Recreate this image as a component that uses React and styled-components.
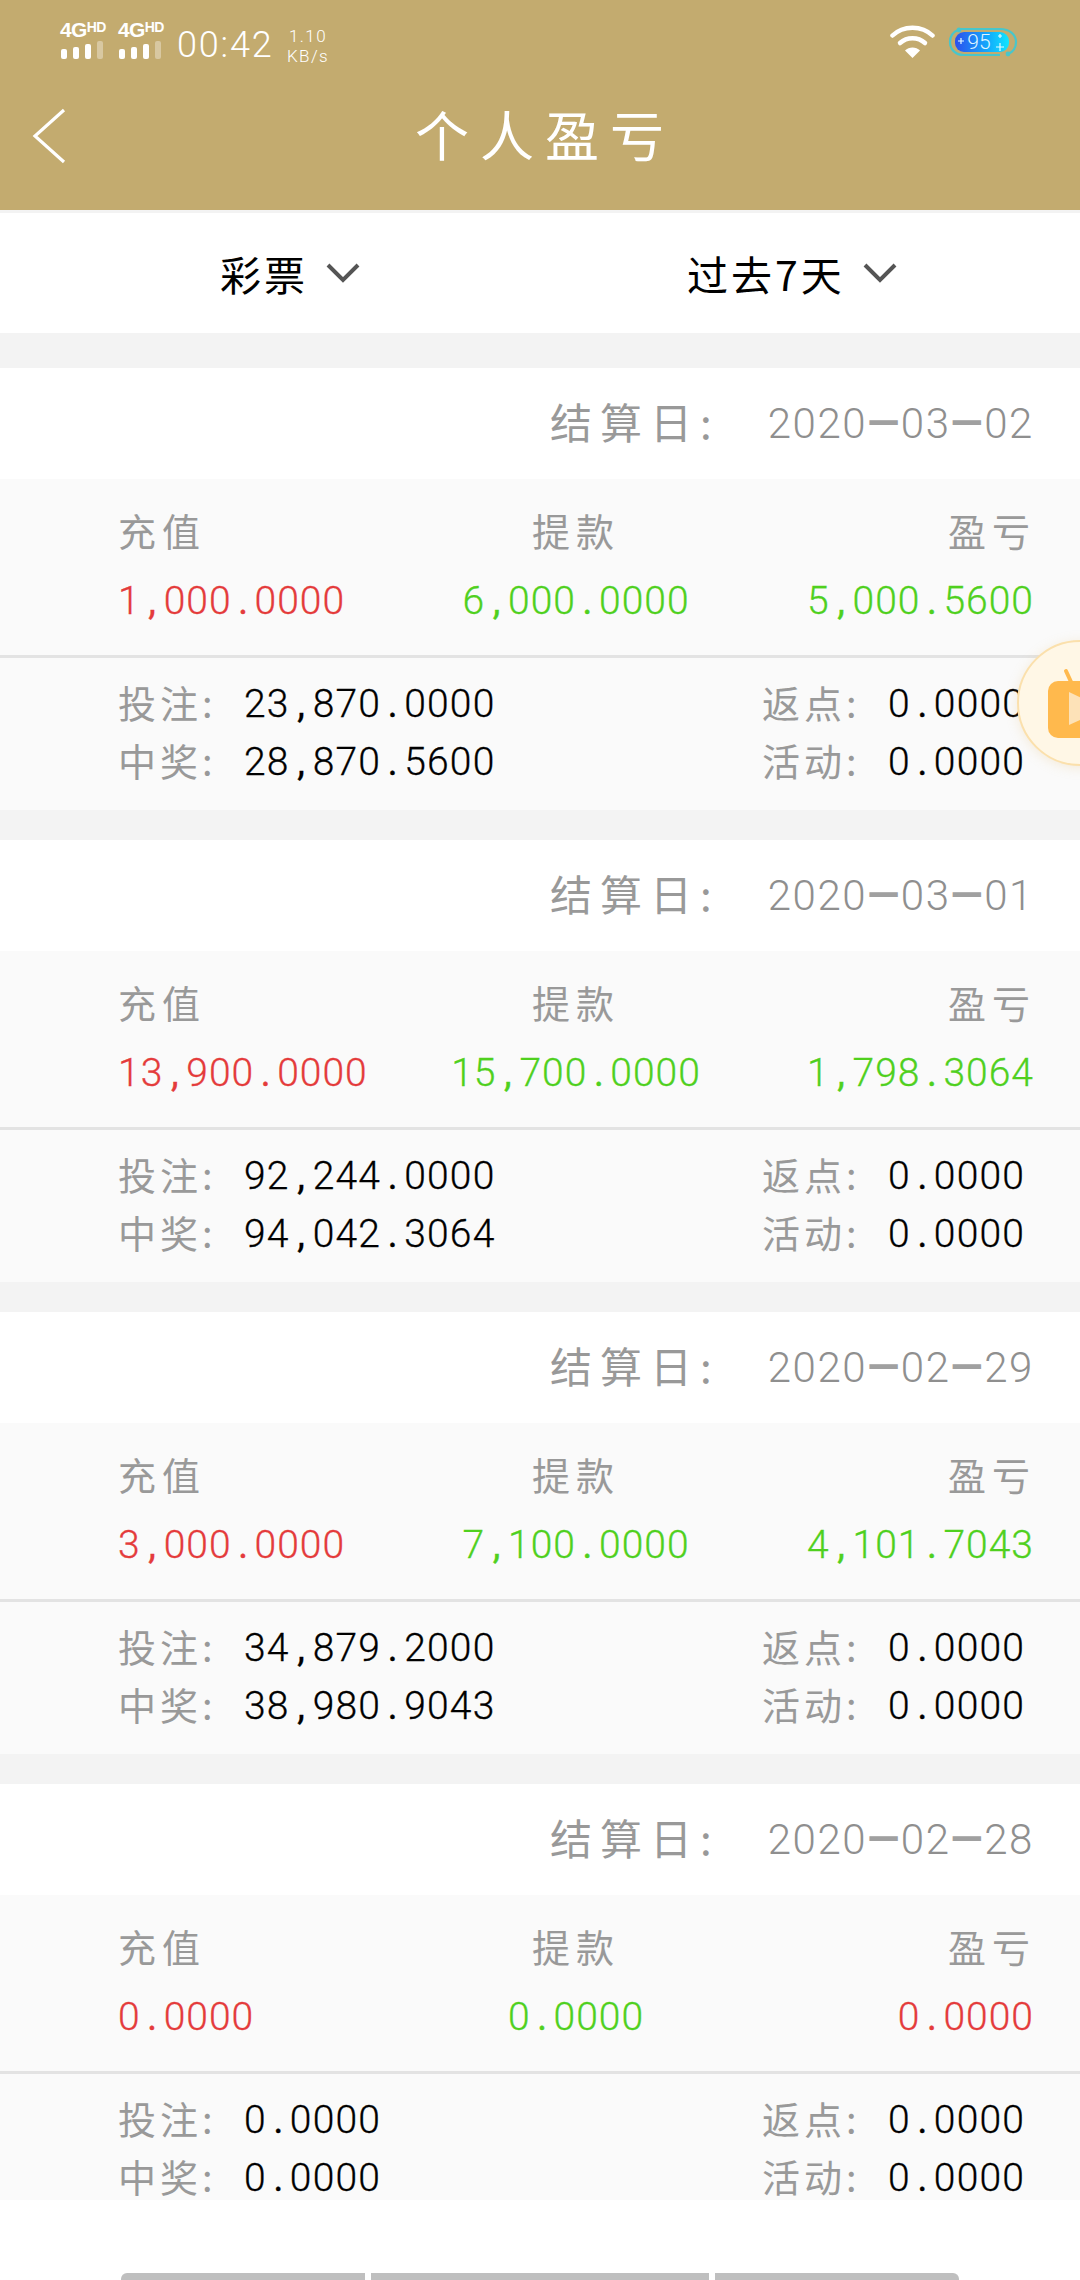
import React from "react";
import styled, { createGlobalStyle } from "styled-components";

const CJK = `"Noto Sans CJK SC", "Noto Sans", sans-serif`;
const NUM = `Roboto, "Liberation Sans", sans-serif`;

const Global = createGlobalStyle`
  html, body { margin: 0; padding: 0; background: #fff; }
  * { box-sizing: border-box; }
`;

const Page = styled.div`
  position: relative;
  width: 1080px;
  height: 2280px;
  overflow: hidden;
  display: flex;
  flex-direction: column;
  background: #f3f3f3;
  font-family: ${CJK};
`;

const Header = styled.header`
  height: 210px;
  flex: none;
  background: #c3ab6f;
  color: #fff;
  display: flex;
  flex-direction: column;
`;

const StatusBar = styled.div`
  height: 78px;
  padding: 21px 62px 0 60px;
  display: flex;
  align-items: flex-start;
`;

const SimGroup = styled.div`
  display: flex;
  gap: 13px;
  width: 117px;
`;

const Sim = styled.div`
  width: 45px;
  display: flex;
  flex-direction: column;
  gap: 2px;
`;

const SimLabel = styled.div`
  font: 700 21px/18px "Liberation Sans", sans-serif;
  letter-spacing: -0.6px;
  white-space: nowrap;
  & > sup {
    font-size: 14px;
    line-height: 10px;
    vertical-align: 5px;
  }
`;

const Signal = styled.div`
  height: 18px;
  display: flex;
  gap: 6px;
  align-items: flex-end;
  padding-left: 1px;
`;

const SignalBar = styled.span`
  width: 6px;
  height: ${(p) => p.$h}px;
  border-radius: 2px;
  background: ${(p) => (p.$off ? "rgba(255,255,255,0.35)" : "#fff")};
`;

const Clock = styled.div`
  width: 108px;
  font: 300 36px/34px ${NUM};
  letter-spacing: 1.8px;
  margin-top: 7px;
  white-space: nowrap;
`;

const Speed = styled.div`
  font: 300 17px/20px ${NUM};
  letter-spacing: 1.4px;
  text-align: center;
  width: 46px;
  margin-top: 5px;
  white-space: nowrap;
`;

const StatusRight = styled.div`
  margin-left: auto;
  display: flex;
  align-items: center;
  gap: 13px;
  margin-top: 4px;
`;

const NavBar = styled.div`
  flex: 1;
  display: grid;
  grid-template-columns: 1fr auto 1fr;
  align-items: center;
  padding: 0 22px 16px 32px;
`;

const Title = styled.h1`
  margin: -5px 0 0;
  font: 400 54px/60px ${CJK};
  letter-spacing: 11px;
  color: #fff;
`;

const FilterBar = styled.div`
  margin-top: 3px;
  height: 120px;
  flex: none;
  background: #fff;
  display: flex;
  align-items: center;
  padding-left: 220px;
  gap: 327px;
`;

const Filter = styled.div`
  display: flex;
  align-items: center;
  gap: 18px;
  color: #000;
  font: 400 41px/50px ${CJK};
  letter-spacing: 3px;
  white-space: nowrap;
`;

const List = styled.div`
  margin-top: 35px;
  flex: 1;
  min-height: 0;
  overflow: hidden;
  display: flex;
  flex-direction: column;
  gap: 30px;
`;

const Card = styled.section`
  flex: none;
  height: 442px;
  display: flex;
  flex-direction: column;
`;

const CardHead = styled.div`
  height: 111px;
  flex: none;
  background: #fff;
  display: flex;
  align-items: center;
  justify-content: flex-end;
  padding-right: 46px;
  color: #999;
`;

const HeadLabel = styled.span`
  font: 400 42px/50px ${CJK};
  letter-spacing: 8px;
  margin: -6px 48px 0 0;
`;

const DateText = styled.span`
  font: 300 42px/50px ${NUM};
  letter-spacing: 1.6px;
  color: #8f8f8f;
  white-space: nowrap;
`;

const Dash = styled.span`
  font-weight: 700;
  color: #a0a0a0;
`;

const Stats = styled.div`
  height: 176px;
  flex: none;
  background: #fafafa;
  padding: 22px 46px 0 118px;
  display: grid;
  grid-template-columns: repeat(3, 1fr);
  grid-template-rows: 58px 58px;
  row-gap: 13px;
  align-items: center;
`;

const StatLabel = styled.div`
  font: 400 38px/58px ${CJK};
  letter-spacing: 6px;
  color: #999;
  text-align: ${(p) => p.$align};
  margin-right: ${(p) => (p.$align === "right" ? "-2px" : "0")};
`;

const StatValue = styled.div`
  font: 300 39px/58px ${NUM};
  letter-spacing: 1px;
  color: ${(p) => p.$color};
  text-align: ${(p) => p.$align};
  white-space: nowrap;
  -webkit-text-stroke: 0.3px ${(p) => p.$color};
`;

const Punct = styled.span`
  display: inline-block;
  width: 23px;
  text-align: center;
  letter-spacing: 0;
  font-weight: 400;
`;

const Divider = styled.div`
  height: 3px;
  flex: none;
  background: #e3e3e3;
`;

const Details = styled.div`
  height: 152px;
  flex: none;
  background: #fafafa;
  padding: 17px 0 0 118px;
  display: grid;
  grid-template-columns: 644px 1fr;
  grid-auto-rows: 58px;
`;

const Detail = styled.div`
  display: flex;
  align-items: center;
  white-space: nowrap;
`;

const DetailLabel = styled.span`
  width: 126px;
  margin-top: -5px;
  font: 400 38px/44px ${CJK};
  letter-spacing: 4px;
  color: #999;
`;

const DetailValue = styled.span`
  font: 300 39px/44px ${NUM};
  letter-spacing: 1.2px;
  color: #000;
  -webkit-text-stroke: 0.3px #000;
`;

const Footer = styled.div`
  height: 80px;
  flex: none;
  background: #fff;
  display: flex;
  align-items: flex-end;
  padding-left: 121px;
  gap: 6px;
`;

const FooterBar = styled.span`
  width: ${(p) => p.$w}px;
  height: 7px;
  background: #bfbfbf;
  border-radius: ${(p) => p.$r};
`;

const FloatButton = styled.div`
  position: absolute;
  top: 640px;
  left: 1017px;
  width: 126px;
  height: 126px;
  border-radius: 50%;
  background: #fff7e6;
  border: 2px solid #fbe0ac;
  box-shadow: 0 2px 12px rgba(230, 190, 120, 0.25);
  & > svg {
    position: absolute;
    left: 26px;
    top: 26px;
  }
`;

const RED = "#e43b3b";
const GREEN = "#4fd01e";

const cards = [
  {
    date: ["2020", "03", "02"],
    stats: [["1,000.0000", RED], ["6,000.0000", GREEN], ["5,000.5600", GREEN]],
    bet: "23,870.0000", win: "28,870.5600",
  },
  {
    date: ["2020", "03", "01"],
    stats: [["13,900.0000", RED], ["15,700.0000", GREEN], ["1,798.3064", GREEN]],
    bet: "92,244.0000", win: "94,042.3064",
  },
  {
    date: ["2020", "02", "29"],
    stats: [["3,000.0000", RED], ["7,100.0000", GREEN], ["4,101.7043", GREEN]],
    bet: "34,879.2000", win: "38,980.9043",
  },
  {
    date: ["2020", "02", "28"],
    stats: [["0.0000", RED], ["0.0000", GREEN], ["0.0000", RED]],
    bet: "0.0000", win: "0.0000",
  },
];

const aligns = ["left", "center", "right"];
const labels = ["充值", "提款", "盈亏"];

const Amount = ({ value }) =>
  value.split(/([,.])/).map((part, i) =>
    i % 2 ? <Punct key={i}>{part}</Punct> : <React.Fragment key={i}>{part}</React.Fragment>
  );

const Chevron = () => (
  <svg width="34" height="20" viewBox="0 0 34 20" fill="none">
    <path d="M2 2 L17 17 L32 2" stroke="#555" strokeWidth="4" />
  </svg>
);

const Wifi = () => (
  <svg width="45" height="33" viewBox="0 0 45 33" fill="none" stroke="#fff" strokeLinecap="round">
    <path d="M2.5 10.5 C13 0 32 0 42.5 10.5" strokeWidth="4.5" />
    <path d="M10 18 C17 11.5 28 11.5 35 18" strokeWidth="4.5" />
    <path d="M15 25.5 C19 21.5 26 21.5 30 25.5 L22.5 33 Z" fill="#fff" stroke="none" />
  </svg>
);

const Battery = () => (
  <svg width="70" height="30" viewBox="0 0 70 30" fill="none">
    <defs>
      <linearGradient id="batt" x1="0" x2="1" y1="0" y2="0">
        <stop offset="0" stopColor="#2c50ee" />
        <stop offset="0.6" stopColor="#13a8fb" />
        <stop offset="1" stopColor="#10e6ff" />
      </linearGradient>
    </defs>
    <rect x="7" y="5" width="54" height="20" rx="9" fill="url(#batt)" />
    <path d="M12 2 H52 C62 2 68 8 68 15 C68 21 65 25 60 27 M52 28 H16 C7 28 2 22 2 15 C2 9 5 5 10 3" stroke="#48c6cb" strokeWidth="2.2" />
    <circle cx="11" cy="3" r="2.4" fill="#48c6cb" />
    <circle cx="60" cy="27" r="2.4" fill="#48c6cb" />
    <text x="31" y="22" textAnchor="middle" fontFamily="Roboto, sans-serif" fontWeight="300" fontSize="21" fill="#dff5ff">95</text>
    <path d="M13 11 V17 M10 14 H16 M52 16 V24 M48 20 H56 M52 7 V11 M50 9 H54" stroke="#e6fbff" strokeWidth="1.2" />
  </svg>
);

const BackArrow = () => (
  <svg width="34" height="56" viewBox="0 0 34 56" fill="none">
    <path d="M32 2 L3 28 L32 54" stroke="#fff" strokeWidth="3.2" />
  </svg>
);

const TvIcon = () => (
  <svg width="70" height="74" viewBox="0 0 70 74">
    <path d="M21 3 L27 16" stroke="#ffb94d" strokeWidth="4" strokeLinecap="round" />
    <rect x="3" y="13" width="90" height="57" rx="10" fill="#ffb94d" />
    <path d="M24 24 L60 41 L24 57 Z" fill="#fde2b8" />
  </svg>
);

const SimCard = () => (
  <Sim>
    <SimLabel>4G<sup>HD</sup></SimLabel>
    <Signal>
      <SignalBar $h={10} />
      <SignalBar $h={12} />
      <SignalBar $h={15} />
      <SignalBar $h={18} $off />
    </Signal>
  </Sim>
);

export default function App() {
  return (
    <>
      <Global />
      <Page>
        <Header>
          <StatusBar>
            <SimGroup>
              <SimCard />
              <SimCard />
            </SimGroup>
            <Clock>00:42</Clock>
            <Speed>1.10<br />KB/s</Speed>
            <StatusRight>
              <Wifi />
              <Battery />
            </StatusRight>
          </StatusBar>
          <NavBar>
            <BackArrow />
            <Title>个人盈亏</Title>
            <span />
          </NavBar>
        </Header>

        <FilterBar>
          <Filter>彩票<Chevron /></Filter>
          <Filter>过去7天<Chevron /></Filter>
        </FilterBar>

        <List>
          {cards.map((c) => (
            <Card key={c.date.join("")}>
              <CardHead>
                <HeadLabel>结算日:</HeadLabel>
                <DateText>
                  {c.date[0]}<Dash>—</Dash>{c.date[1]}<Dash>—</Dash>{c.date[2]}
                </DateText>
              </CardHead>
              <Stats>
                {labels.map((l, i) => (
                  <StatLabel key={l} $align={aligns[i]}>{l}</StatLabel>
                ))}
                {c.stats.map(([v, color], i) => (
                  <StatValue key={i} $align={aligns[i]} $color={color}><Amount value={v} /></StatValue>
                ))}
              </Stats>
              <Divider />
              <Details>
                <Detail><DetailLabel>投注:</DetailLabel><DetailValue><Amount value={c.bet} /></DetailValue></Detail>
                <Detail><DetailLabel>返点:</DetailLabel><DetailValue><Amount value="0.0000" /></DetailValue></Detail>
                <Detail><DetailLabel>中奖:</DetailLabel><DetailValue><Amount value={c.win} /></DetailValue></Detail>
                <Detail><DetailLabel>活动:</DetailLabel><DetailValue><Amount value="0.0000" /></DetailValue></Detail>
              </Details>
            </Card>
          ))}
        </List>

        <Footer>
          <FooterBar $w={244} $r="6px 0 0 0" />
          <FooterBar $w={338} $r="0" />
          <FooterBar $w={244} $r="0 6px 0 0" />
        </Footer>

        <FloatButton><TvIcon /></FloatButton>
      </Page>
    </>
  );
}
